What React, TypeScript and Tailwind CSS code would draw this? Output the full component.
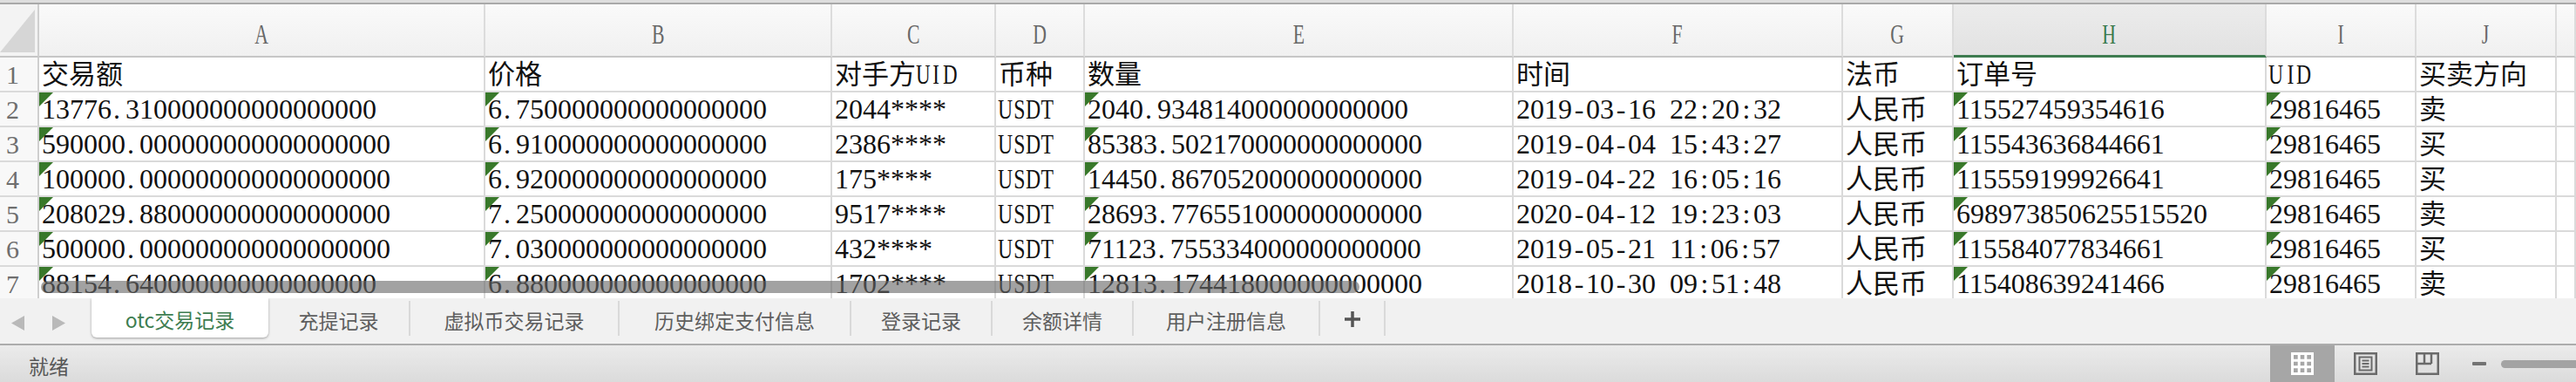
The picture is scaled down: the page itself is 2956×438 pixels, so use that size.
import type { ReactNode } from 'react'

const HEADERS = ['A', 'B', 'C', 'D', 'E', 'F', 'G', 'H', 'I', 'J', '']

const ROWS: string[][] = [
  ['交易额', '价格', '对手方UID', '币种', '数量', '时间', '法币', '订单号', 'UID', '买卖方向', ''],
  ['13776.310000000000000000', '6.750000000000000000', '2044****', 'USDT', '2040.934814000000000000', '2019-03-16 22:20:32', '人民币', '115527459354616', '29816465', '卖', ''],
  ['590000.000000000000000000', '6.910000000000000000', '2386****', 'USDT', '85383.502170000000000000', '2019-04-04 15:43:27', '人民币', '115543636844661', '29816465', '买', ''],
  ['100000.000000000000000000', '6.920000000000000000', '175****', 'USDT', '14450.867052000000000000', '2019-04-22 16:05:16', '人民币', '115559199926641', '29816465', '买', ''],
  ['208029.880000000000000000', '7.250000000000000000', '9517****', 'USDT', '28693.776551000000000000', '2020-04-12 19:23:03', '人民币', '698973850625515520', '29816465', '卖', ''],
  ['500000.000000000000000000', '7.030000000000000000', '432****', 'USDT', '71123.755334000000000000', '2019-05-21 11:06:57', '人民币', '115584077834661', '29816465', '买', ''],
  ['88154.640000000000000000', '6.880000000000000000', '1702****', 'USDT', '12813.174418000000000000', '2018-10-30 09:51:48', '人民币', '115408639241466', '29816465', '卖', ''],
]

// columns holding numbers stored as text get the green corner flag
const FLAGGED = [0, 1, 4, 7, 8]

const TABS = [
  { label: '充提记录', w: 'w-[163px]' },
  { label: '虚拟币交易记录', w: 'w-[240px]' },
  { label: '历史绑定支付信息', w: 'w-[266px]' },
  { label: '登录记录', w: 'w-[162px]' },
  { label: '余额详情', w: 'w-[162px]' },
  { label: '用户注册信息', w: 'w-[214px]' },
]

// the sheet font keeps every ascii glyph at half an em, like SimSun
function halfWidth(value: string) {
  return value.split(/([^0-9\u4e00-\u9fff])/).map((part, i) => {
    if (part === '') return null
    if (part.length > 1 || /[0-9\u4e00-\u9fff]/.test(part)) return part
    if (/[A-Z]/.test(part)) {
      return (
        <span key={i} className="inline-flex w-[0.5em] justify-center">
          <span className="inline-block scale-x-[0.74]">{part}</span>
        </span>
      )
    }
    if (part === '.') {
      return (
        <span key={i} className="inline-block w-[0.5em] pl-[2px]">
          .
        </span>
      )
    }
    return (
      <span key={i} className="inline-block w-[0.5em] text-center">
        {part === ' ' ? '\u00a0' : part}
      </span>
    )
  })
}

function Cell({ value, flag }: { value: string; flag: boolean }) {
  const cjk = /[\u4e00-\u9fff]/.test(value)
  return (
    <div
      className={`relative h-[40px] overflow-hidden whitespace-nowrap border-r-2 border-b-2 border-[#dadada] bg-white pl-[3px] pt-[1px] leading-[37px] text-[#111] ${
        cjk ? 'text-[31px]' : 'text-[32px]'
      }`}
    >
      {flag && (
        <span className="absolute left-0 top-0 h-0 w-0 border-t-[16px] border-r-[16px] border-t-[#38782a] border-r-transparent" />
      )}
      {halfWidth(value)}
    </div>
  )
}

function ViewButton({ active, children }: { active?: boolean; children: ReactNode }) {
  return (
    <div className={`flex items-center justify-center ${active ? 'w-[74px] bg-[#a6a6a6]' : 'w-[71px]'}`}>
      {children}
    </div>
  )
}

export default function App() {
  return (
    <div className="h-[438px] w-[2956px] overflow-hidden bg-white font-['Liberation_Serif','Noto_Sans_CJK_SC',serif]">
      {/* window chrome above the column headers */}
      <div className="h-[3px] bg-[#dedede]" />
      <div className="h-[2px] bg-[#a9a9a9]" />

      <div className="relative h-[337px] overflow-hidden">
        <div className="grid grid-cols-[45px_512px_398px_188px_102px_492px_378px_127px_359px_172px_161px_22px]">
          {/* corner */}
          <div className="flex h-[61px] items-end border-r-2 border-b-2 border-r-[#cfcfcf] border-b-[#c6c6c6] bg-[#f3f3f3] pb-[4px]">
            <svg width="40" height="49" viewBox="0 0 40 49">
              <polygon points="40,0 40,49 0,49" fill="#d6d6d6" />
            </svg>
          </div>
          {HEADERS.map((h, i) =>
            h === 'H' ? (
              <div
                key={i}
                className="h-[61px] border-r-2 border-b-[3px] border-r-[#dcdcdc] border-b-[#3d7b4f] bg-linear-to-b from-[#ececec] to-[#e2e2e2] pt-[11px] text-center text-[31px] leading-[47px] text-[#3b7a4e]"
              >
                <span className="inline-block scale-x-[0.7]">{h}</span>
              </div>
            ) : (
              <div
                key={i}
                className="h-[61px] border-r-2 border-b-2 border-r-[#dcdcdc] border-b-[#c6c6c6] bg-linear-to-b from-[#fafafa] to-[#f0f0f0] pt-[11px] text-center text-[31px] leading-[47px] text-[#686868]"
              >
                <span className="inline-block scale-x-[0.7]">{h}</span>
              </div>
            ),
          )}

          {ROWS.map((row, r) => (
            <>
              <div
                key={`n${r}`}
                className="h-[40px] border-r-2 border-b-2 border-r-[#cfcfcf] border-b-[#dadada] bg-[#f8f8f8] pl-[7px] pt-[1px] text-[30px] leading-[37px] text-[#6e6e6e]"
              >
                {r + 1}
              </div>
              {row.map((v, c) => (
                <Cell key={`${r}-${c}`} value={v} flag={r > 0 && FLAGGED.includes(c)} />
              ))}
            </>
          ))}
        </div>

        {/* horizontal scroll thumb floating over the last row */}
        <div className="absolute left-[47px] top-[317px] h-[14px] w-[1513px] rounded-full bg-[rgba(105,105,105,0.62)]" />
      </div>

      {/* sheet tabs */}
      <div className="flex h-[52px] items-start bg-[#f1f1f1] font-['Noto_Sans_CJK_SC',sans-serif] text-[23px]">
        <div className="flex h-full w-[105px] items-center gap-[32px] pl-[13px] pt-[4px]">
          <svg width="15" height="17" viewBox="0 0 15 17">
            <polygon points="15,0 15,17 0,8.5" fill="#b9b9b9" />
          </svg>
          <svg width="15" height="17" viewBox="0 0 15 17">
            <polygon points="0,0 0,17 15,8.5" fill="#b9b9b9" />
          </svg>
        </div>
        <div className="flex h-[45px] w-[203px] items-center justify-center rounded-b-[6px] bg-white pt-[4px] text-[#3d7d50] shadow-[0_1px_3px_rgba(0,0,0,0.35)]">
          otc交易记录
        </div>
        {TABS.map((t) => (
          <div
            key={t.label}
            className={`mt-[3px] flex h-[40px] items-center justify-center border-r-2 border-[#d9d9d9] pt-[4px] text-[#5e5e5e] ${t.w}`}
          >
            {t.label}
          </div>
        ))}
        <div className="mt-[3px] flex h-[40px] w-[75px] items-center justify-center border-r-2 border-[#d9d9d9] pt-[2px]">
          <svg width="18" height="18" viewBox="0 0 18 18">
            <path d="M9 0V18M0 9H18" stroke="#555" strokeWidth="3.5" />
          </svg>
        </div>
      </div>
      <div className="h-[2px] bg-[#acacac]" />

      {/* status bar */}
      <div className="flex h-[42px] justify-between bg-linear-to-b from-[#ebebeb] to-[#dbdbdb]">
        <div className="flex items-center pl-[33px] pt-[4px] font-['Noto_Sans_CJK_SC',sans-serif] text-[23px] text-[#575757]">
          就绪
        </div>
        <div className="flex items-stretch">
          <ViewButton active>
            <svg width="26" height="26" viewBox="0 0 26 26">
              <rect x="1.5" y="1.5" width="23" height="23" fill="none" stroke="#fff" strokeWidth="3" />
              <path d="M9.2 1V25M16.8 1V25M1 9.2H25M1 16.8H25" stroke="#fff" strokeWidth="3" />
            </svg>
          </ViewButton>
          <ViewButton>
            <svg width="27" height="26" viewBox="0 0 27 26">
              <rect x="1.25" y="1.25" width="24.5" height="23.5" fill="none" stroke="#6b6b6b" strokeWidth="2.5" />
              <rect x="6.5" y="5.5" width="14" height="15" fill="none" stroke="#6b6b6b" strokeWidth="2" />
              <path d="M9.5 9.5H17.5M9.5 13H17.5M9.5 16.5H17.5" stroke="#6b6b6b" strokeWidth="2" />
            </svg>
          </ViewButton>
          <ViewButton>
            <svg width="27" height="26" viewBox="0 0 27 26">
              <rect x="1.25" y="1.25" width="24.5" height="23.5" fill="none" stroke="#6b6b6b" strokeWidth="2.5" />
              <path d="M10 1V13M18 1V13M1 13H18" stroke="#6b6b6b" strokeWidth="2.5" fill="none" />
            </svg>
          </ViewButton>
          <div className="ml-[16px] flex items-center">
            <div className="h-[4px] w-[16px] rounded-[1px] bg-[#737373]" />
          </div>
          <div className="ml-[17px] flex items-center">
            <div className="h-[9px] w-[86px] rounded-l-full bg-[#a3a3a3]" />
          </div>
        </div>
      </div>
    </div>
  )
}
